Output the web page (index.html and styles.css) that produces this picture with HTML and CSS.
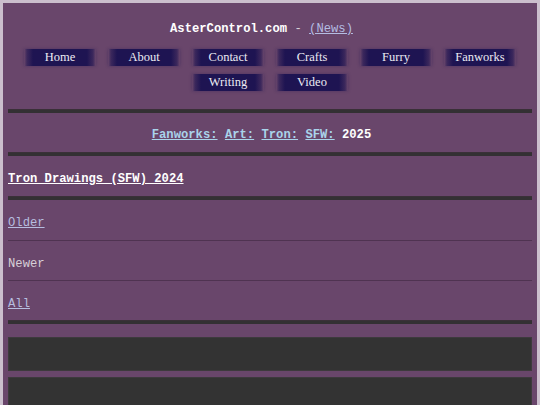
FILE: index.html
```html
<!DOCTYPE html>
<html>
<head>
<meta charset="utf-8">
<link rel="stylesheet" href="styles.css">
</head>
<body>
<div class="page">
  <div class="header">
    <span class="site">AsterControl.com</span> <span class="dash">-</span> <a class="news" href="#">(News)</a>
  </div>
  <nav class="nav">
    <a class="btn" href="#">Home</a>
    <a class="btn" href="#">About</a>
    <a class="btn" href="#">Contact</a>
    <a class="btn" href="#">Crafts</a>
    <a class="btn" href="#">Furry</a>
    <a class="btn" href="#">Fanworks</a>
    <a class="btn" href="#">Writing</a>
    <a class="btn" href="#">Video</a>
  </nav>
  <div class="bar bar-first"></div>
  <div class="crumbs">
    <a href="#">Fanworks:</a> <a href="#">Art:</a> <a href="#">Tron:</a> <a href="#">SFW:</a> <span class="year">2025</span>
  </div>
  <div class="bar"></div>
  <div class="row"><a class="title" href="#">Tron Drawings (SFW) 2024</a></div>
  <div class="bar"></div>
  <div class="row"><a class="link" href="#">Older</a></div>
  <div class="row sep"><span class="plain">Newer</span></div>
  <div class="row sep"><a class="link" href="#">All</a></div>
  <div class="bar"></div>
  <div class="box box-first"></div>
  <div class="box"></div>
</div>
</body>
</html>
```
FILE: styles.css
```css
html, body {
  margin: 0;
  padding: 0;
  background: #cbbfcd;
  height: 100%;
  overflow: hidden;
}
.page {
  margin: 3px 3px 0 3px;
  background: #69466b;
  padding: 0 5px 40px 5px;
  font-family: "Liberation Mono", monospace;
  font-size: 12.2px;
  color: #ddd6dd;
}
.header {
  height: 20px;
  padding-top: 16px;
  padding-right: 17px;
  text-align: center;
  line-height: 20px;
}
.site { color: #ffffff; font-weight: bold; }
.dash { color: #d8d0d8; }
.news { color: #b4bce2; text-decoration: underline; }
.nav {
  display: flex;
  flex-wrap: wrap;
  justify-content: center;
  column-gap: 12px;
  row-gap: 8px;
  padding-top: 10px;
}
.btn {
  width: 72px;
  height: 17px;
  line-height: 17px;
  text-align: center;
  font-family: "Liberation Serif", serif;
  font-size: 12.5px;
  color: #ecebf2;
  text-decoration: none;
  background: linear-gradient(to right, rgba(30,20,82,0) 0, rgba(30,20,82,0.6) 3px, #1e1452 9px, #1e1452 calc(100% - 9px), rgba(30,20,82,0.6) calc(100% - 3px), rgba(30,20,82,0) 100%);
  box-shadow: 0 0 3px rgba(30,20,82,0.35);
}
.bar {
  height: 4px;
  background: #333033;
  border-top: 1px solid #3a3038;
  box-sizing: border-box;
}
.bar-first { margin-top: 18px; }
.crumbs {
  height: 33px;
  padding-top: 6px;
  line-height: 33px;
  text-align: center;
  padding-right: 17px;
  font-weight: bold;
}
.crumbs a { color: #a9d3ea; text-decoration: underline; }
.year { color: #ffffff; }
.title {
  color: #ffffff;
  font-weight: bold;
  text-decoration: underline;
}
.row {
  height: 40px;
  padding-top: 6px;
  line-height: 34px;
  box-sizing: border-box;
}
.sep { border-top: 1px solid #4f3351; }
.link { color: #b6bddf; text-decoration: underline; }
.plain { color: #d7d0d7; }
.box {
  height: 34px;
  background: #333333;
  border: 1px solid #3d3a3d;
  box-sizing: border-box;
  margin-top: 6px;
}
.box-first { margin-top: 13px; }
```
